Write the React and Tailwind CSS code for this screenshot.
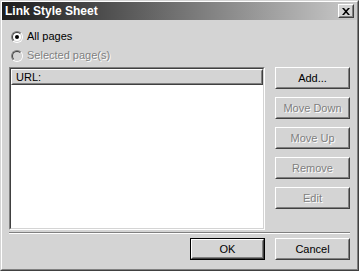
import React from 'react';

const RAISED_OUT = 'border border-t-white border-l-white border-r-[#404040] border-b-[#404040]';
const RAISED_IN = 'border border-t-[#d4d4d4] border-l-[#d4d4d4] border-r-[#808080] border-b-[#808080]';
const DISABLED = 'text-[#808080] [text-shadow:1px_1px_0_#ffffff]';

function Button({ children, disabled, isDefault }) {
  const face = (
    <div className={`w-full h-full ${RAISED_OUT}`}>
      <div className={`w-full h-full flex items-center justify-center ${RAISED_IN} ${disabled ? DISABLED : 'text-black'}`}>
        {children}
      </div>
    </div>
  );
  if (isDefault) {
    return <div className="w-[75px] h-[22px] border border-black">{face}</div>;
  }
  return <div className="w-[75px] h-[22px]">{face}</div>;
}

function Radio({ checked, disabled, label }) {
  return (
    <div className="h-[19px] flex items-center pl-[2px]">
      <div className="w-[12px] h-[12px] rounded-full border border-t-[#808080] border-l-[#808080] border-r-white border-b-white">
        <div
          className={`w-full h-full rounded-full border border-t-[#404040] border-l-[#404040] border-r-[#d4d4d4] border-b-[#d4d4d4] flex items-center justify-center ${
            disabled ? 'bg-[#d4d4d4]' : 'bg-white'
          }`}
        >
          {checked && <div className="w-[4px] h-[4px] rounded-full bg-black" />}
        </div>
      </div>
      <span className={`ml-[4px] ${disabled ? DISABLED : 'text-black'}`}>{label}</span>
    </div>
  );
}

function CloseIcon() {
  return (
    <svg width="8" height="7" viewBox="0 0 8 7">
      <path d="M0 0h2l2 2.2L6 0h2L5 3.5 8 7H6L4 4.8 2 7H0l3-3.5z" fill="#000" />
    </svg>
  );
}

export default function App() {
  return (
    <div className="w-[359px] h-[271px] bg-[#d4d4d4] border border-t-[#d4d4d4] border-l-[#d4d4d4] border-r-[#404040] border-b-[#404040] font-['Liberation_Sans',Arial,sans-serif] text-[11px] leading-none select-none">
      <div className="w-full h-full flex flex-col border border-t-white border-l-white border-r-[#808080] border-b-[#808080]">
        {/* title bar */}
        <div className="h-[18px] flex items-center justify-between pl-[3px] pr-[3px] bg-[linear-gradient(to_right,#1c1c1c,#cacaca)]">
          <span className="text-white font-bold text-[12px]">Link Style Sheet</span>
          <div className={`w-[16px] h-[14px] bg-[#d4d4d4] ${RAISED_OUT}`}>
            <div className={`w-full h-full flex items-center justify-center ${RAISED_IN}`}>
              <CloseIcon />
            </div>
          </div>
        </div>

        <div className="flex flex-col px-[7px] pt-[7px]">
          <Radio checked label="All pages" />
          <Radio disabled label="Selected page(s)" />

          <div className="flex gap-[10px] mt-[2px] h-[163px]">
            {/* list box */}
            <div className="flex-1 border border-t-[#808080] border-l-[#808080] border-r-white border-b-white">
              <div className="w-full h-full border border-t-[#404040] border-l-[#404040] border-r-[#d4d4d4] border-b-[#d4d4d4] bg-white">
                <div className={`h-[16px] bg-[#d4d4d4] ${RAISED_OUT}`}>
                  <div className={`w-full h-full flex items-center pl-[3px] ${RAISED_IN}`}>URL:</div>
                </div>
              </div>
            </div>

            <div className="flex flex-col gap-[8px]">
              <Button>Add...</Button>
              <Button disabled>Move Down</Button>
              <Button disabled>Move Up</Button>
              <Button disabled>Remove</Button>
              <Button disabled>Edit</Button>
            </div>
          </div>

          <div className="mt-[2px] border-t border-b border-t-[#808080] border-b-white" />

          <div className="flex justify-end gap-[10px] mt-[4px]">
            <Button isDefault>OK</Button>
            <Button>Cancel</Button>
          </div>
        </div>
      </div>
    </div>
  );
}
